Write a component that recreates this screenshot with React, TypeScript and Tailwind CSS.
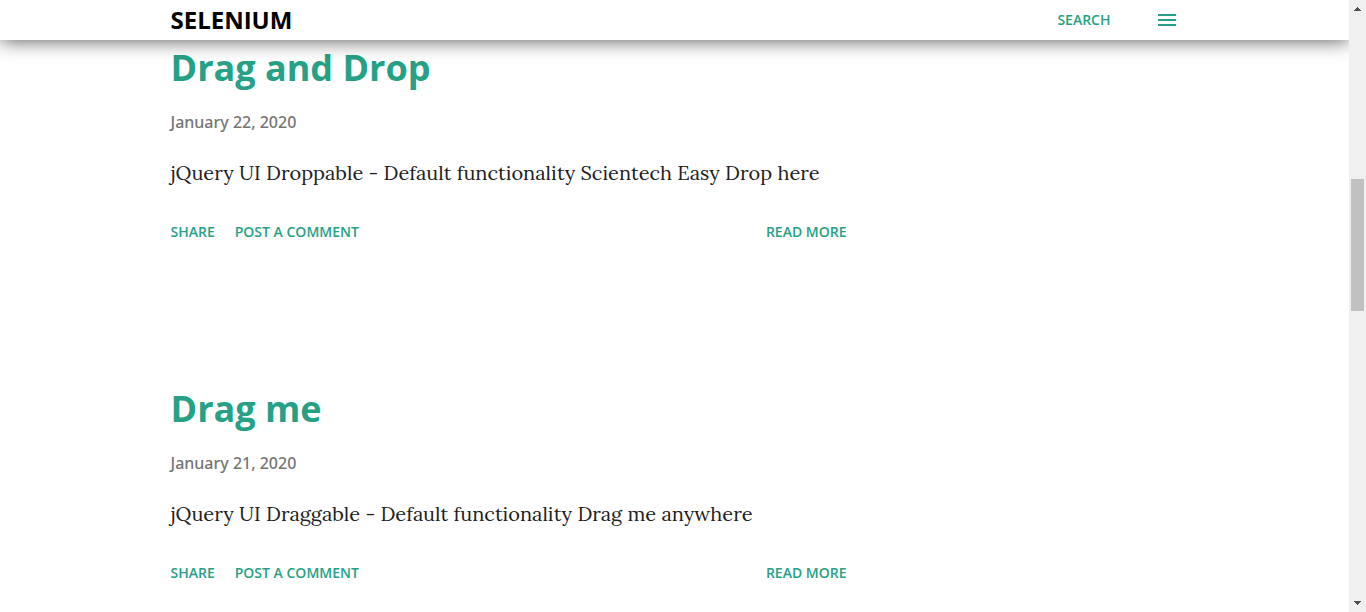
import React from "react";

type Post = { id: string; title: string; date: string; snippet: string };

const posts: Post[] = [
  {
    id: "drag-and-drop",
    title: "Drag and Drop",
    date: "January 22, 2020",
    snippet: "jQuery UI Droppable - Default functionality Scientech Easy Drop here",
  },
  {
    id: "drag-me",
    title: "Drag me",
    date: "January 21, 2020",
    snippet: "jQuery UI Draggable - Default functionality Drag me anywhere",
  },
];

function Header() {
  return (
    <header className="relative z-10 shrink-0 bg-white shadow-[0_0_20px_0_rgba(0,0,0,0.7)]">
      <div className="mx-auto flex h-10 max-w-[1008px] items-center justify-between">
        <a href="#home" className="text-2xl font-bold text-black uppercase">
          Selenium
        </a>
        <div className="flex items-center gap-9">
          <button type="button" className="text-sm font-semibold text-[#26a186] uppercase">
            Search
          </button>
          <button type="button" aria-label="Menu" className="pl-2">
            <svg viewBox="0 0 24 24" className="size-6 fill-[#26a186]" aria-hidden="true">
              <path d="M3 18h18v-2H3v2zm0-5h18v-2H3v2zm0-7v2h18V6H3z" />
            </svg>
          </button>
        </div>
      </div>
    </header>
  );
}

function PostCard({ post }: { post: Post }) {
  const href = `#${post.id}`;
  return (
    <article className="max-w-[676px] pb-[139px]">
      <h2 className="text-4xl leading-[56px] font-bold text-[#26a186]">
        <a href={href}>{post.title}</a>
      </h2>
      <p className="mt-3.5 font-['Noto_Sans','Open_Sans',sans-serif] text-base leading-6 font-medium text-[#757575]">
        <time>{post.date}</time>
      </p>
      <p className="mt-[23px] font-['Lora','Liberation_Serif',serif] text-xl leading-8 text-[#212121]">
        {post.snippet}
      </p>
      <div className="mt-[33px] flex justify-between text-sm leading-5 font-semibold text-[#26a186] uppercase">
        <div className="flex gap-5">
          <button type="button" className="uppercase">
            Share
          </button>
          <a href={`${href}-comments`}>Post a Comment</a>
        </div>
        <a href={href}>Read more</a>
      </div>
    </article>
  );
}

function ScrollBar() {
  return (
    <div className="flex w-[17px] shrink-0 flex-col items-center bg-[#f0f0f0]" aria-hidden="true">
      <svg viewBox="0 0 17 17" className="size-[17px] fill-[#505050]" shapeRendering="crispEdges">
        <path d="M8 7h1v1h1v1h1v1h1v1H5v-1h1V9h1V8h1z" />
      </svg>
      <div className="flex w-full grow flex-col items-center">
        <div className="grow-[162]" />
        <div className="w-[13px] grow-[132] bg-[#c1c1c1]" />
        <div className="grow-[284]" />
      </div>
      <svg viewBox="0 0 17 17" className="size-[17px] fill-[#505050]" shapeRendering="crispEdges">
        <path d="M5 6h7v1h-1v1h-1v1H9v1H8V9H7V8H6V7H5z" />
      </svg>
    </div>
  );
}

export default function App() {
  return (
    <div className="flex h-screen overflow-hidden bg-white font-['Open_Sans',sans-serif]">
      <div className="flex min-w-0 grow flex-col overflow-hidden">
        <Header />
        <main className="min-h-0 grow overflow-hidden">
          <div className="mx-auto max-w-[1008px]">
            {posts.map((post) => (
              <PostCard key={post.id} post={post} />
            ))}
          </div>
        </main>
      </div>
      <ScrollBar />
    </div>
  );
}
